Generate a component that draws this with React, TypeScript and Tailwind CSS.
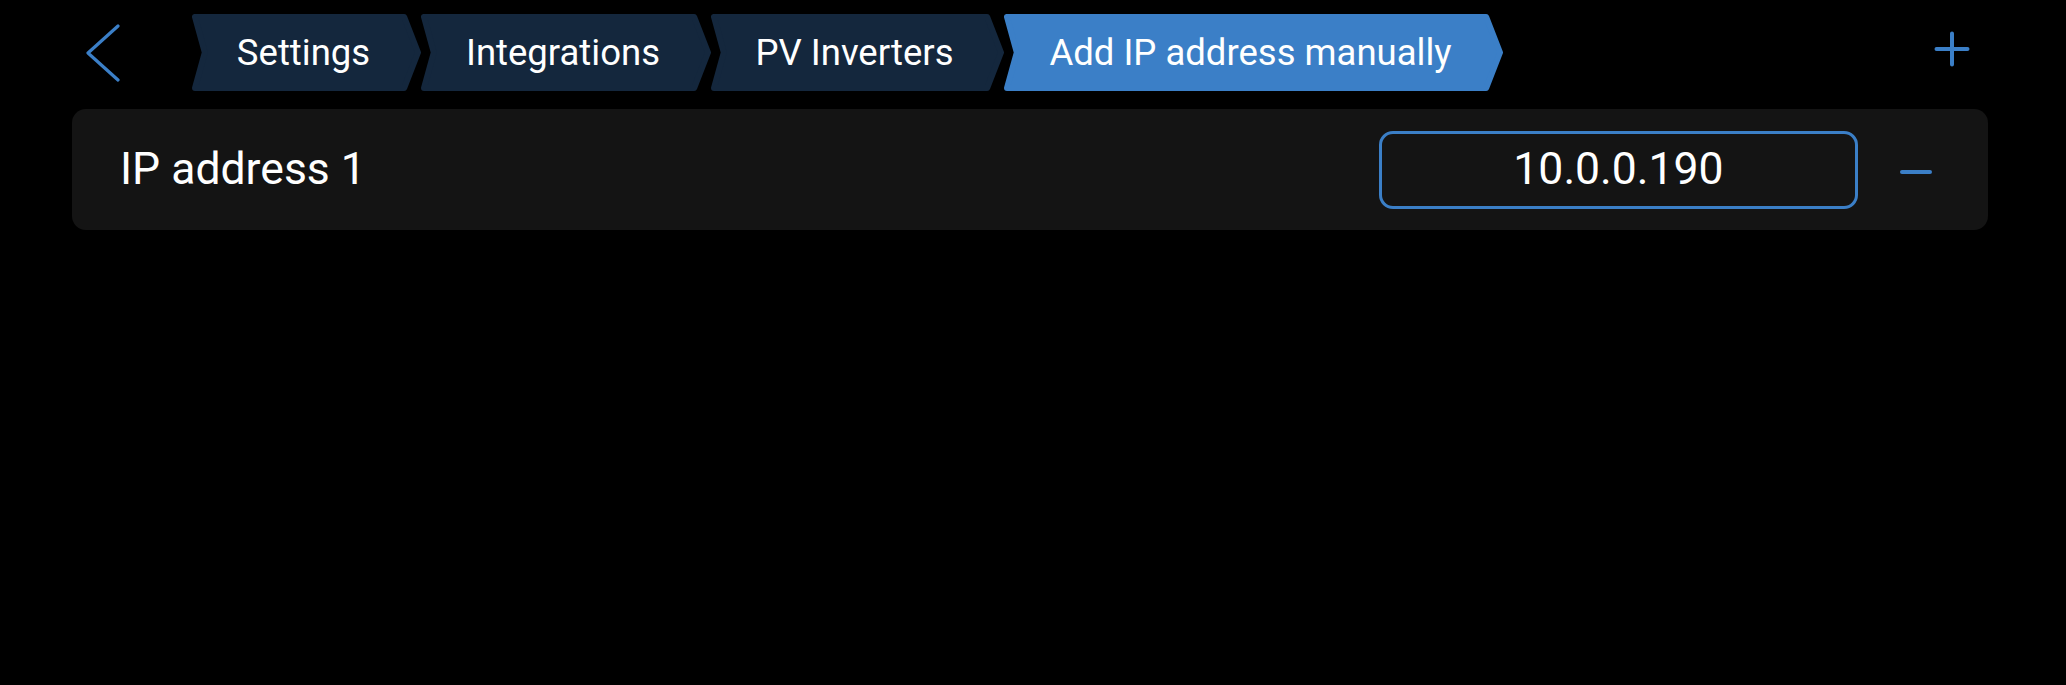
import React from "react";

const crumbs = [
  { label: "Settings", w: "w-[229px]", width: 229, active: false },
  { label: "Integrations", w: "w-[290px]", width: 290, active: false },
  { label: "PV Inverters", w: "w-[293px]", width: 293, active: false },
  { label: "Add IP address manually", w: "w-[499px]", width: 499, active: true },
];

function Crumb({ label, w, width, active }: { label: string; w: string; width: number; active: boolean }) {
  const h = 77;
  const r = 3;
  const pts = [
    [r, r],
    [width - 15 - r * 0.6, r],
    [width - r, h / 2],
    [width - 15 - r * 0.6, h - r],
    [r, h - r],
    [11 + r * 0.6, h / 2],
  ]
    .map((p) => p.join(","))
    .join(" ");
  const color = active ? "#3b7fc7" : "#14273d";
  return (
    <div className={`relative ${w} h-[77px] shrink-0 flex items-center justify-center pr-[6px] pt-[2px]`}>
      <svg className="absolute inset-0" width={width} height={h} viewBox={`0 0 ${width} ${h}`}>
        <polygon points={pts} fill={color} stroke={color} strokeWidth={r * 2} strokeLinejoin="round" />
      </svg>
      <span className="relative text-[36.5px] leading-none text-white whitespace-nowrap">{label}</span>
    </div>
  );
}

export default function App() {
  return (
    <div
      className="w-[2066px] h-[685px] bg-black text-white overflow-hidden"
      style={{ fontFamily: "Roboto, 'Noto Sans', sans-serif" }}
    >
      <div className="flex items-center pl-[72px] pr-[78px] pt-[14px]">
        <button className="w-[120px] h-[77px] flex items-center pl-[14px] shrink-0">
          <svg width="36" height="60" viewBox="0 0 36 60">
            <polyline
              points="32,3 2,30 32,57"
              fill="none"
              stroke="#3b7fc7"
              strokeWidth="3.2"
              strokeLinecap="round"
              strokeLinejoin="round"
            />
          </svg>
        </button>
        <div className="flex items-center">
          {crumbs.map((c) => (
            <Crumb key={c.label} {...c} />
          ))}
        </div>
        <div className="flex-1" />
        <button className="w-[64px] h-[77px] mr-[4px] pb-[8px] flex items-center justify-center shrink-0">
          <svg width="36" height="36" viewBox="0 0 36 36">
            <path d="M18 2.5V33.5M2.5 18H33.5" stroke="#3b7fc7" strokeWidth="4" strokeLinecap="round" />
          </svg>
        </button>
      </div>

      <div className="ml-[72px] mr-[78px] mt-[18px] h-[121px] rounded-[14px] bg-[#141414] flex items-center pl-[48px] pr-[54px]">
        <div className="text-[44.5px] leading-none text-white">IP address 1</div>
        <div className="flex-1" />
        <div className="w-[479px] h-[78px] rounded-[14px] border-[3px] border-[#3b7fc7] flex items-center justify-center">
          <span className="text-[44.5px] leading-none text-white">10.0.0.190</span>
        </div>
        <button className="ml-[40px] mt-[5px] w-[36px] h-[36px] flex items-center justify-center">
          <svg width="36" height="8" viewBox="0 0 36 8">
            <path d="M4 4H32" stroke="#3b7fc7" strokeWidth="4" strokeLinecap="round" />
          </svg>
        </button>
      </div>
    </div>
  );
}
